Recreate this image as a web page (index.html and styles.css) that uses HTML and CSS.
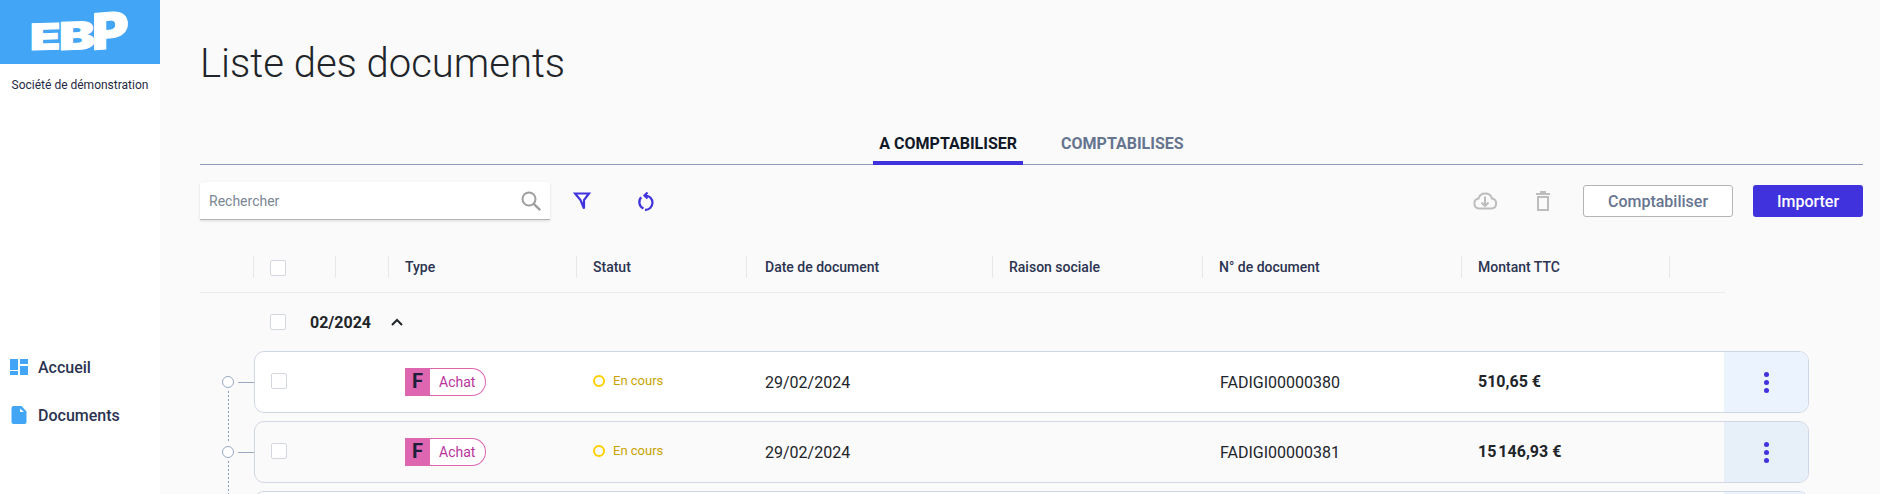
FILE: index.html
```html
<!DOCTYPE html>
<html lang="fr">
<head>
    <meta charset="UTF-8">
    <meta name="viewport" content="width=device-width, initial-scale=1.0">
    <title>Liste des documents</title>
    <link rel="stylesheet" href="styles.css">
</head>
<body>
    <aside class="sidebar">
        <div class="logo">
            <span class="logo-e">E</span><span class="logo-b">B</span><span class="logo-p">P</span>
        </div>
        <div class="company">Société de démonstration</div>
        <nav class="nav">
            <a class="nav-item" href="#">
                <svg width="18" height="16" viewBox="0 0 18 16"><path fill="#42a5f5" d="M0 0h8v11H0zM10 0h8v5h-8zM10 7h8v9h-8zM0 12h8v4H0z"/></svg>
                Accueil
            </a>
            <a class="nav-item" href="#">
                <svg width="18" height="18" viewBox="0 0 18 18"><path fill="#42a5f5" d="M3.500 0h8l5 5.500V16a2 2 0 0 1-2 2h-11a2 2 0 0 1-2-2V2a2 2 0 0 1 2-2z"/><path fill="#fff" d="M10 2.500l4 3.500h-4z"/></svg>
                Documents
            </a>
        </nav>
    </aside>
    <main class="main">
        <h1 class="title">Liste des documents</h1>
        <div class="tabs">
            <div class="tab active">A COMPTABILISER</div>
            <div class="tab">COMPTABILISES</div>
        </div>
        <div class="toolbar">
            <div class="search">
                <span class="search-label">Rechercher</span>
                <svg width="22" height="22" viewBox="0 0 22 22" fill="none" stroke="#9e9e9e" stroke-width="2"><circle cx="9" cy="9" r="6.500"/><path d="M13.800 13.800l6.400 6.400" stroke-width="2.400"/></svg>
            </div>
            <button class="icon-btn filter-btn">
                <svg width="18" height="20" viewBox="0 0 18 20" fill="none" stroke="#4032dc" stroke-width="2.200"><path d="M2 2.500h14l-5 6.500v8.500L7.500 9z"/></svg>
            </button>
            <button class="icon-btn reload-btn">
                <svg width="18" height="20" viewBox="0 0 18 20" fill="none" stroke="#4032dc" stroke-width="2.200"><path d="M4.200 6.300A7 7 0 0 0 6.500 17.500"/><path d="M8 18.900A7 7 0 0 0 8.500 4.500"/><path d="M10.500 1.500L7.500 4.500l3 3"/></svg>
            </button>
            <div class="toolbar-right">
                <svg class="cloud" width="24" height="18" viewBox="0 0 24 18" fill="none" stroke="#bdbdbd" stroke-width="2"><path d="M6 16.500a5 5 0 0 1-.5-9.900A7 7 0 0 1 19 6.600a5 5 0 0 1-.5 9.900z"/><path d="M12 4.500V14M8.500 10.500L12 14l3.500-3.500"/></svg>
                <svg class="trash" width="14" height="20" viewBox="0 0 14 20" fill="none" stroke="#bdbdbd" stroke-width="2"><path d="M0 3h14M4 1h6M2 6h10v13H2z"/></svg>
                <button class="btn btn-outline">Comptabiliser</button>
                <button class="btn btn-primary">Importer</button>
            </div>
        </div>

        <div class="table-head">
            <div class="th"></div>
            <div class="th"><span class="check"></span></div>
            <div class="th"></div>
            <div class="th">Type</div>
            <div class="th">Statut</div>
            <div class="th th-date">Date de document</div>
            <div class="th">Raison sociale</div>
            <div class="th">N° de document</div>
            <div class="th">Montant TTC</div>
            <div class="th"></div>
        </div>

        <div class="group">
            <span class="check"></span>
            <span class="group-name">02/2024</span>
            <svg width="12" height="8" viewBox="0 0 12 8" fill="none" stroke="#212529" stroke-width="2"><path d="M1 7l5-5 5 5"/></svg>
        </div>

        <div class="row-wrap">
            <div class="node"></div>
            <div class="row">
                <div class="cell cell-check"><span class="check"></span></div>
                <div class="cell cell-type"><span class="badge"><span class="badge-letter">F</span><span class="badge-text">Achat</span></span></div>
                <div class="cell cell-status"><span class="dot"></span>En cours</div>
                <div class="cell cell-date">29/02/2024</div>
                <div class="cell cell-name"></div>
                <div class="cell cell-num">FADIGI00000380</div>
                <div class="cell cell-amount">510,65 €</div>
                <div class="cell cell-more"><span class="dots"><i></i><i></i><i></i></span></div>
            </div>
        </div>
        <div class="row-wrap alt">
            <div class="node"></div>
            <div class="row">
                <div class="cell cell-check"><span class="check"></span></div>
                <div class="cell cell-type"><span class="badge"><span class="badge-letter">F</span><span class="badge-text">Achat</span></span></div>
                <div class="cell cell-status"><span class="dot"></span>En cours</div>
                <div class="cell cell-date">29/02/2024</div>
                <div class="cell cell-name"></div>
                <div class="cell cell-num">FADIGI00000381</div>
                <div class="cell cell-amount">15&#8239;146,93 €</div>
                <div class="cell cell-more"><span class="dots"><i></i><i></i><i></i></span></div>
            </div>
        </div>
        <div class="row-wrap">
            <div class="node"></div>
            <div class="row">
                <div class="cell cell-more"></div>
            </div>
        </div>
    </main>
</body>
</html>
```

FILE: styles.css
```css
html, body {
    margin: 0;
    height: 494px;
    overflow: hidden;
}
body {
    display: flex;
    font-family: Roboto, sans-serif;
    font-size: 14px;
    color: #212529;
    background-color: #fafafa;
}
button {
    font-family: inherit;
    cursor: pointer;
}

/* sidebar */
.sidebar {
    width: 160px;
    flex: none;
    background-color: #fff;
    display: flex;
    flex-direction: column;
}
.logo {
    height: 64px;
    background-color: #42a5f5;
    display: flex;
    align-items: baseline;
    padding: 7px 0 0 30px;
    box-sizing: border-box;
    color: #fff;
    font-family: Inter, sans-serif;
    font-weight: 900;
    line-height: 1;
    -webkit-text-stroke: 1px #fff;
}
.logo span {
    display: block;
    transform-origin: left bottom;
}
.logo-e {
    width: 29px;
    font-size: 36px;
    transform: scaleX(1.38) skewY(-2deg);
}
.logo-b {
    width: 33px;
    font-size: 38px;
    transform: scaleX(1.42) skewY(-3deg);
}
.logo-p {
    font-size: 50px;
    transform: scaleX(1.12) skewY(-5deg);
}
.company {
    margin-top: 13px;
    font-size: 12px;
    line-height: 16px;
    color: #1f2a44;
    text-align: center;
}
.nav {
    margin-top: 260px;
    display: flex;
    flex-direction: column;
    gap: 20px;
}
.nav-item {
    height: 28px;
    padding-left: 10px;
    display: flex;
    align-items: center;
    gap: 10px;
    color: #2b3350;
    font-size: 16px;
    font-weight: 500;
    text-decoration: none;
}
.nav-item svg {
    flex: none;
}

/* main */
.main {
    flex: 1;
    padding-left: 40px;
    min-width: 0;
}
.title {
    margin: 39px 0 0;
    font-size: 40px;
    line-height: 50px;
    font-weight: 300;
    color: #212529;
}

/* tabs */
.tabs {
    width: 1663px;
    height: 41px;
    margin-top: 34px;
    border-bottom: 1px solid #8c9bb9;
    display: flex;
    justify-content: center;
    gap: 32px;
}
.tab {
    height: 42px;
    padding: 0 6px;
    box-sizing: border-box;
    font-size: 16px;
    line-height: 42px;
    font-weight: 700;
    color: #66758f;
}
.tab.active {
    color: #111827;
    border-bottom: 4px solid #4032dc;
}

/* toolbar */
.toolbar {
    width: 1663px;
    margin-top: 17px;
    height: 38px;
    display: flex;
    align-items: center;
}
.search {
    width: 350px;
    height: 38px;
    box-sizing: border-box;
    padding: 0 8px 0 9px;
    background-color: #fff;
    border-radius: 3px 3px 0 0;
    border-bottom: 1px solid #b5b5b5;
    box-shadow: 0 1px 3px rgba(0, 0, 0, 0.12);
    display: flex;
    align-items: center;
    justify-content: space-between;
}
.search-label {
    font-size: 14px;
    color: #7b8794;
}
.icon-btn {
    border: none;
    padding: 0;
    background: none;
    display: flex;
}
.filter-btn {
    margin-left: 23px;
}
.reload-btn {
    margin-left: 46px;
}
.toolbar-right {
    margin-left: auto;
    display: flex;
    align-items: center;
}
.trash {
    margin-left: 39px;
}
.btn {
    height: 32px;
    border-radius: 3px;
    font-size: 16px;
    font-weight: 500;
}
.btn-outline {
    width: 150px;
    margin-left: 33px;
    background-color: #fff;
    border: 1px solid #b5b5b5;
    color: #66758f;
}
.btn-primary {
    width: 110px;
    margin-left: 20px;
    background-color: #4032dc;
    border: none;
    color: #fff;
}

/* table */
.table-head {
    width: 1525px;
    height: 44px;
    margin-top: 29px;
    box-sizing: border-box;
    border-bottom: 1px solid #ececec;
    padding-left: 53px;
    display: grid;
    grid-template-columns: 17px 65px 53px 188px 170px 246px 210px 259px 208px 1fr;
}
.th {
    height: 22px;
    margin-top: 7px;
    padding-left: 16px;
    border-left: 1px solid #e8e8e8;
    font-size: 14px;
    line-height: 22px;
    font-weight: 500;
    color: #2b3350;
}
.table-head .th:nth-child(1),
.table-head .th:nth-child(3) {
    padding: 0;
}
.table-head .th:nth-child(2) {
    border-left: none;
    padding: 4px 0 0;
}
.table-head .th-date {
    padding-left: 18px;
}
.check {
    display: block;
    width: 14px;
    height: 14px;
    background-color: #fff;
    border: 1px solid #d3d7de;
    border-radius: 2px;
}
.group {
    height: 58px;
    padding-left: 70px;
    display: flex;
    align-items: center;
    font-size: 16px;
    font-weight: 700;
}
.group-name {
    margin-left: 24px;
    margin-right: 20px;
}

/* rows */
.row-wrap {
    position: relative;
    height: 62px;
    margin-bottom: 8px;
    padding-left: 54px;
}
.row {
    width: 1555px;
    height: 62px;
    box-sizing: border-box;
    background-color: #fff;
    border: 1px solid #d0d6e4;
    border-radius: 10px;
    overflow: hidden;
    display: flex;
    align-items: stretch;
}
.alt .row {
    background-color: #fafafa;
}
.node {
    position: absolute;
    left: 22px;
    top: 25px;
    width: 10px;
    height: 10px;
    background-color: #fff;
    border: 1px solid #9aa8c2;
    border-radius: 50%;
}
.node::before {
    content: "";
    position: absolute;
    left: 15px;
    top: 5px;
    width: 16px;
    border-top: 1px solid #9aa8c2;
}
.node::after {
    content: "";
    position: absolute;
    left: 5px;
    top: 14px;
    width: 1px;
    height: 50px;
    background: repeating-linear-gradient(#8c9bb9 0 2px, transparent 2px 4px);
}
.cell {
    display: flex;
    align-items: center;
    box-sizing: border-box;
    font-size: 16px;
}
.cell-check {
    width: 150px;
    padding-left: 16px;
    padding-bottom: 2px;
}
.cell-type {
    width: 188px;
}
.cell-status {
    width: 172px;
    padding-bottom: 3px;
    font-size: 13px;
    color: #c9a400;
    gap: 8px;
}
.cell-date {
    width: 246px;
}
.cell-name {
    width: 209px;
}
.cell-num {
    width: 258px;
}
.cell-amount {
    width: 245px;
    font-weight: 700;
    padding-bottom: 1px;
}
.cell-more {
    width: 84px;
    justify-content: center;
    background-color: #ebf3fe;
    margin-left: auto;
}
.alt .cell-more {
    background-color: #e7f0f9;
}
.badge {
    display: flex;
    height: 28px;
    font-size: 14px;
}
.badge-letter {
    width: 25px;
    background-color: #de66b0;
    color: #1b1f3b;
    font-size: 20px;
    font-weight: 700;
    line-height: 26px;
    text-align: center;
}
.badge-text {
    width: 56px;
    box-sizing: border-box;
    padding-left: 9px;
    border: 1px solid #de66b0;
    border-left: none;
    border-radius: 0 14px 14px 0;
    background-color: #fff;
    color: #b8339a;
    line-height: 27px;
}
.dot {
    width: 8px;
    height: 8px;
    border: 2px solid #ffd000;
    border-radius: 50%;
}
.dots {
    display: flex;
    flex-direction: column;
    gap: 3px;
}
.dots i {
    width: 5px;
    height: 5px;
    background-color: #4032dc;
    border-radius: 50%;
}
```
